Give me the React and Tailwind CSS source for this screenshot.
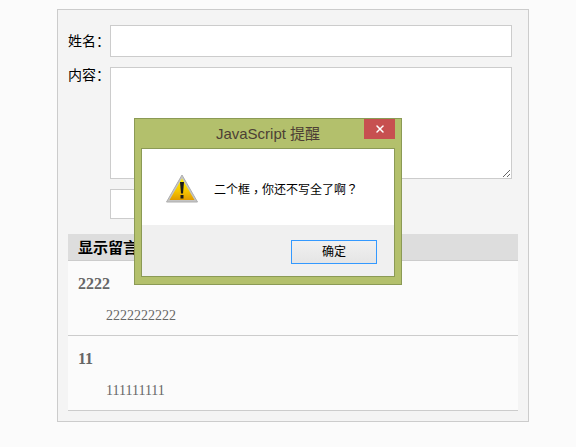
import React from 'react';
import { X } from 'lucide-react';

const sans = 'font-["Liberation_Sans","Noto_Sans_CJK_SC",sans-serif]';
const serif = 'font-["Liberation_Serif","Noto_Sans_CJK_SC",serif]';
// the reference centres the dialog's full-width punctuation, as the TC cut does
const punct = 'font-["Noto_Sans_CJK_TC",sans-serif]';

const Message = ({ name, text }) => (
  <div className="h-[75px] border-b border-[#cccccc] bg-[#fbfbfb] pt-[13px] pl-[10px]">
    <div className={`${serif} text-[16px] leading-[20px] font-bold text-[#666666]`}>{name}</div>
    <div className={`${serif} mt-[12px] pl-[28px] text-[14px] leading-[20px] text-[#666666]`}>{text}</div>
  </div>
);

// warning triangle from the alert dialog
const WarningIcon = () => (
  <svg width="32" height="30" viewBox="0 0 32 30" className="-mt-[2px] shrink-0">
    <defs>
      <linearGradient id="warnFill" x1="0" y1="0" x2="0" y2="1">
        <stop offset="0" stopColor="#fff200" />
        <stop offset="0.6" stopColor="#f6c400" />
        <stop offset="1" stopColor="#e09a00" />
      </linearGradient>
    </defs>
    <path d="M16 1 L31.5 28 H0.5 Z" fill="#c4c4c4" stroke="#aeaeae" strokeWidth="1" strokeLinejoin="round" />
    <path d="M16 4.5 L28.5 26 H3.5 Z" fill="url(#warnFill)" />
    <path d="M14 8 H18 L17 19.5 H15 Z" fill="#1a1a1a" />
    <rect x="14.5" y="21" width="3" height="3.5" fill="#1a1a1a" />
  </svg>
);

const AlertDialog = () => (
  <div className="absolute top-[118px] left-[134px] flex h-[167px] w-[268px] flex-col border border-[#8b9a55] bg-[#b3c06c] px-[6px] pb-[7px]">
    <div className="relative h-[29px] shrink-0">
      <div className={`${sans} pt-[5px] text-center text-[15px] leading-[20px] text-[#4d3f35]`}>JavaScript 提醒</div>
      <div className="absolute top-0 right-0 flex h-[20px] w-[31px] items-center justify-center bg-[#c75050] text-white">
        <X size={12} strokeWidth={3} />
      </div>
    </div>
    <div className="flex flex-1 flex-col border border-[#8b9a55]">
      <div className="flex h-[76px] items-start bg-white pt-[27px] pl-[24px]">
        <WarningIcon />
        <span className={`${sans} mt-[3px] ml-[16px] text-[12px] leading-[20px] text-black`}>
          二个框<span className={`${punct} inline-block translate-y-[3px]`}>，</span>你还不写全了啊<span className={punct}>？</span>
        </span>
      </div>
      <div className="flex flex-1 items-start justify-end bg-[#f0f0f0] pt-[15px] pr-[17px]">
        <button className={`${sans} h-[24px] w-[86px] border border-[#3399ff] bg-gradient-to-b from-[#f0f0f0] to-[#e5e5e5] text-[12px] text-black`}>确定</button>
      </div>
    </div>
  </div>
);

export default function App() {
  return (
    <div className="relative h-[447px] w-[576px] overflow-hidden bg-[#fbfbfb]">
      <div className="mt-[9px] ml-[57px] inline-block h-[413px] w-[472px] border border-[#cccccc] bg-[#f4f4f4] px-[10px] pt-[15px]">
        <div className="flex h-[32px] items-center">
          <label className={`${sans} w-[42px] text-[14px] text-black`}>姓名：</label>
          <input className="h-[32px] w-[402px] border border-[#cccccc] bg-white" />
        </div>
        <div className="mt-[10px] flex items-start">
          <label className={`${sans} w-[42px] text-[14px] leading-[16px] text-black`}>内容：</label>
          <textarea className="h-[112px] w-[402px] border border-[#cccccc] bg-white" />
        </div>
        <div className="mt-[10px] pl-[42px]">
          <input className="block h-[30px] w-[60px] border border-[#cccccc] bg-white" />
        </div>
        <div className="mt-[15px] w-[450px]">
          <div className={`${sans} h-[27px] border-b border-[#cccccc] bg-[#dddddd] pl-[10px] text-[15px] leading-[27px] font-bold text-black`}>显示留言</div>
          <Message name="2222" text="2222222222" />
          <Message name="11" text="111111111" />
        </div>
      </div>
      <AlertDialog />
    </div>
  );
}
